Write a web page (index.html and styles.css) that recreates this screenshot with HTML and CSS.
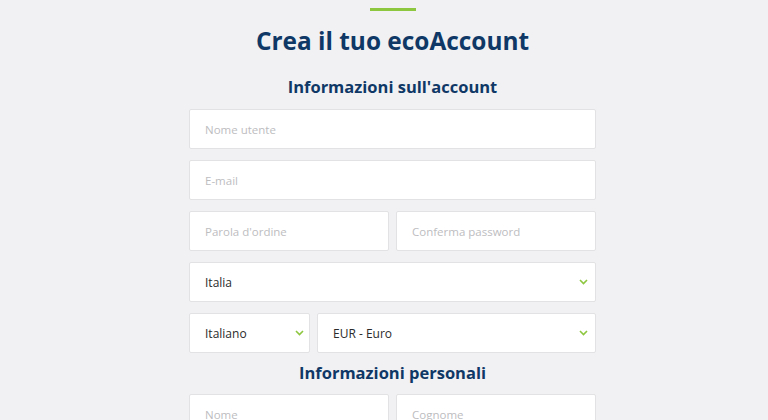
FILE: index.html
```html
<!DOCTYPE html>
<html lang="it">

<head>
    <meta charset="UTF-8">
    <meta name="viewport" content="width=device-width, initial-scale=1.0">
    <title>Crea il tuo ecoAccount</title>
    <link rel="stylesheet" href="styles.css">
</head>

<body>
    <div class="page">
        <form class="signup">
            <div class="accent-bar"></div>
            <h1>Crea il tuo ecoAccount</h1>

            <h2>Informazioni sull'account</h2>
            <div class="row">
                <input type="text" class="field" placeholder="Nome utente">
            </div>
            <div class="row">
                <input type="email" class="field" placeholder="E-mail">
            </div>
            <div class="row">
                <input type="password" class="field" placeholder="Parola d'ordine">
                <input type="password" class="field" placeholder="Conferma password">
            </div>
            <div class="row">
                <div class="select">
                    <span>Italia</span>
                    <svg class="chevron" width="9" height="6" viewBox="0 0 9 6"><path d="M1 1l3.5 3.5L8 1" fill="none" stroke="#8dc63f" stroke-width="1.6"/></svg>
                </div>
            </div>
            <div class="row">
                <div class="select select-lang">
                    <span>Italiano</span>
                    <svg class="chevron" width="9" height="6" viewBox="0 0 9 6"><path d="M1 1l3.5 3.5L8 1" fill="none" stroke="#8dc63f" stroke-width="1.6"/></svg>
                </div>
                <div class="select select-currency">
                    <span>EUR - Euro</span>
                    <svg class="chevron" width="9" height="6" viewBox="0 0 9 6"><path d="M1 1l3.5 3.5L8 1" fill="none" stroke="#8dc63f" stroke-width="1.6"/></svg>
                </div>
            </div>

            <h2 class="section-personal">Informazioni personali</h2>
            <div class="row">
                <input type="text" class="field" placeholder="Nome">
                <input type="text" class="field" placeholder="Cognome">
            </div>
        </form>
    </div>
</body>

</html>
```

FILE: styles.css
```css
:root {
    --navy: #0f3866;
    --green: #8dc63f;
    --background-color: #f1f1f3;
    --border-color: #e2e2e4;
    --placeholder-color: #bdbdbf;
    --text-color: #2b2b2b;
}

body {
    font-family: 'Open Sans', 'Noto Sans', sans-serif;
    background-color: var(--background-color);
    margin: 0;
    padding: 0;
}

.page {
    padding-left: 17px;
}

.signup {
    width: 407px;
    margin: 0 auto;
    padding-top: 8px;
}

.accent-bar {
    width: 46px;
    height: 3px;
    margin: 0 auto;
    background-color: var(--green);
}

h1 {
    text-align: center;
    color: var(--navy);
    font-size: 24.4px;
    font-weight: 700;
    line-height: 34px;
    margin: 13px 0 0;
}

h2 {
    text-align: center;
    color: var(--navy);
    font-size: 16.5px;
    font-weight: 700;
    line-height: 24px;
    margin: 17px 0 10px;
}

.section-personal {
    line-height: 22px;
    margin: -2px 0 10px;
}

.row {
    display: flex;
    gap: 7px;
    margin-bottom: 11px;
}

.field,
.select {
    flex: 1;
    box-sizing: border-box;
    height: 40px;
    padding: 0 15px;
    background-color: white;
    border: 1px solid var(--border-color);
    border-radius: 2px;
    font-family: inherit;
    font-size: 12px;
    color: var(--text-color);
    min-width: 0;
}

.field {
    font-size: 11.5px;
}

.field::placeholder {
    color: var(--placeholder-color);
}

.select {
    display: flex;
    align-items: center;
    justify-content: space-between;
}

.select-lang {
    flex: 0 0 121px;
}

.select-currency {
    flex: 1;
}

.chevron {
    margin-right: -8px;
}

.select-lang .chevron {
    margin-right: -10px;
}
```
